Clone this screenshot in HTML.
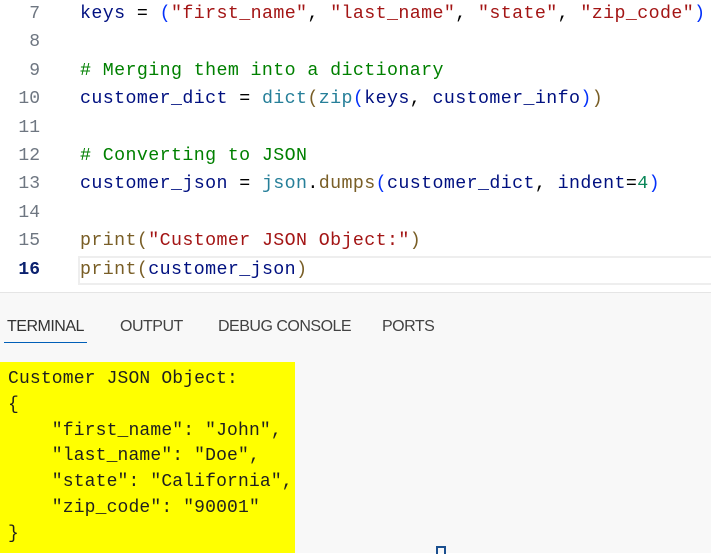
<!DOCTYPE html>
<html><head><meta charset="utf-8"><style>
*{margin:0;padding:0;box-sizing:border-box}
body{width:711px;height:553px;overflow:hidden;background:#fff;position:relative;font-family:"Liberation Mono",monospace}
.ln{position:absolute;left:0;width:40px;text-align:right;font-size:18px;color:#6e7681;line-height:28px}
.code{position:absolute;left:80px;font-size:18.3px;letter-spacing:0.4px;line-height:28px;white-space:pre;color:#001080}
.s{color:#a31515}.c{color:#008000}.f{color:#795e26}.t{color:#267f99}.n{color:#098658}.p{color:#0431fa}.k{color:#000}
#cur{position:absolute;left:78px;top:256px;width:633px;height:29px;border:2px solid #eeeeee;border-right:none}
#panel{position:absolute;left:0;top:292px;width:711px;height:261px;background:#f8f8f8;border-top:1px solid #e5e5e5}
.tab{position:absolute;top:318px;font-family:"Liberation Sans",sans-serif;font-size:16px;color:#424242;letter-spacing:-0.5px}
#hl{position:absolute;left:0;top:362px;width:295px;height:191px;background:#ffff00}
.term{position:absolute;left:8px;font-size:18px;letter-spacing:0.15px;line-height:25.8px;white-space:pre;color:#1f1f1f;top:367px}
</style></head><body>
<div class="ln" style="top:0">7</div>
<div class="ln" style="top:28.4px">8</div>
<div class="ln" style="top:56.8px">9</div>
<div class="ln" style="top:85.2px">10</div>
<div class="ln" style="top:113.6px">11</div>
<div class="ln" style="top:142px">12</div>
<div class="ln" style="top:170.4px">13</div>
<div class="ln" style="top:198.8px">14</div>
<div class="ln" style="top:227.2px">15</div>
<div class="ln" style="top:255.6px;color:#0b216f;font-weight:bold">16</div>
<div id="cur"></div>
<div class="code" style="top:0">keys <span class="k">=</span> <span class="p">(</span><span class="s">"first_name"</span><span class="k">,</span> <span class="s">"last_name"</span><span class="k">,</span> <span class="s">"state"</span><span class="k">,</span> <span class="s">"zip_code"</span><span class="p">)</span></div>
<div class="code c" style="top:56.8px"># Merging them into a dictionary</div>
<div class="code" style="top:85.2px">customer_dict <span class="k">=</span> <span class="t">dict</span><span class="f">(</span><span class="t">zip</span><span class="p">(</span>keys<span class="k">,</span> customer_info<span class="p">)</span><span class="f">)</span></div>
<div class="code c" style="top:142px"># Converting to JSON</div>
<div class="code" style="top:170.4px">customer_json <span class="k">=</span> <span class="t">json</span><span class="k">.</span><span class="f">dumps</span><span class="p">(</span>customer_dict<span class="k">,</span> indent<span class="k">=</span><span class="n">4</span><span class="p">)</span></div>
<div class="code" style="top:227.2px"><span class="f">print</span><span class="f">(</span><span class="s">"Customer JSON Object:"</span><span class="f">)</span></div>
<div class="code" style="top:255.6px"><span class="f">print</span><span class="f">(</span>customer_json<span class="f">)</span></div>
<div id="panel"></div>
<div class="tab" style="left:7px;color:#333">TERMINAL</div>
<div style="position:absolute;left:4px;top:342px;width:83px;height:1px;background:#005fb8"></div>
<div class="tab" style="left:120px">OUTPUT</div>
<div class="tab" style="left:218px">DEBUG CONSOLE</div>
<div class="tab" style="left:382px">PORTS</div>
<div id="hl"></div>
<div class="term">Customer JSON Object:
{
    "first_name": "John",
    "last_name": "Doe",
    "state": "California",
    "zip_code": "90001"
}</div>
<div style="position:absolute;left:436px;top:546px;width:10px;height:8px;border:2px solid #1a4f8f;border-bottom:none"></div>
</body></html>
